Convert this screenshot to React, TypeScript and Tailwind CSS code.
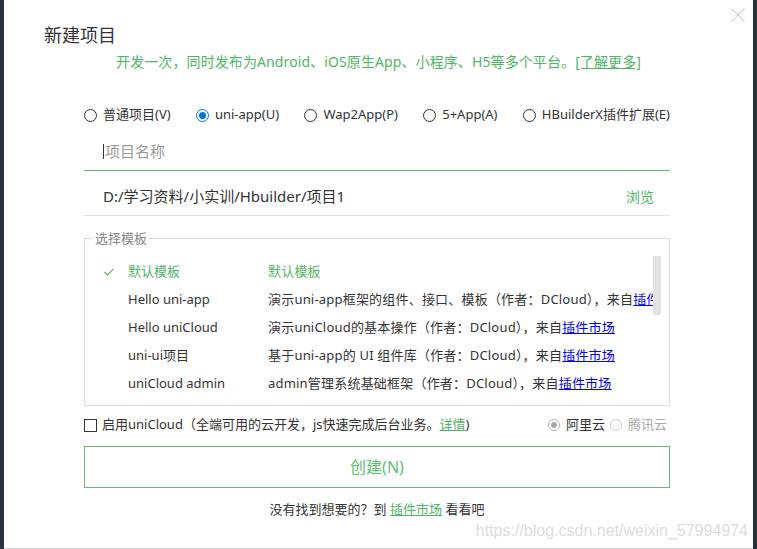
import React from "react";

const FONT = { fontFamily: '"Noto Sans", "Noto Sans CJK SC", sans-serif' };

const TEMPLATES = [
  { name: "默认模板", desc: "默认模板", active: true },
  { name: "Hello uni-app", desc: "演示uni-app框架的组件、接口、模板（作者：DCloud），来自", link: "插件市场" },
  { name: "Hello uniCloud", desc: "演示uniCloud的基本操作（作者：DCloud），来自", link: "插件市场" },
  { name: "uni-ui项目", desc: "基于uni-app的 UI 组件库（作者：DCloud），来自", link: "插件市场" },
  { name: "uniCloud admin", desc: "admin管理系统基础框架（作者：DCloud），来自", link: "插件市场" },
];

const TYPES = [
  { label: "普通项目(V)" },
  { label: "uni-app(U)", checked: true },
  { label: "Wap2App(P)" },
  { label: "5+App(A)" },
  { label: "HBuilderX插件扩展(E)" },
];

function Radio({ checked }: { checked?: boolean }) {
  return (
    <span
      className={`flex h-[13px] w-[13px] items-center justify-center rounded-full border ${
        checked ? "border-[#0078d7]" : "border-[#333]"
      }`}
    >
      {checked && <span className="h-[7px] w-[7px] rounded-full bg-[#0078d7]" />}
    </span>
  );
}

export default function App() {
  return (
    <div className="flex h-[549px] w-[757px] overflow-hidden bg-white" style={FONT}>
      <div className="w-[4px] bg-[#2c3140]" />
      <div className="relative flex-1 border-b border-[#d4d4d4] bg-white">
        <button className="absolute right-[8px] top-[8px]">
          <svg width="14" height="14" viewBox="0 0 14 14">
            <path d="M0.5 0.5L13.5 13.5M13.5 0.5L0.5 13.5" stroke="#c4c4c4" strokeWidth="1" />
          </svg>
        </button>

        <div className="mt-[23px] h-[24px] pl-[40px] text-[18px] leading-[24px] text-[#333]">新建项目</div>
        <div className="mt-[5px] h-[20px] text-center text-[14px] leading-[20px] tracking-[0.1px] text-[#4fb665]">
          开发一次，同时发布为Android、iOS原生App、小程序、H5等多个平台。
          <span className="underline">[了解更多]</span>
        </div>

        <div className="ml-[80px] w-[586px]">
          <div className="mt-[33px] flex h-[20px] items-center justify-between text-[13px] text-[#333]">
            {TYPES.map((t) => (
              <label key={t.label} className="flex items-center gap-[6px]">
                <Radio checked={t.checked} />
                <span>{t.label}</span>
              </label>
            ))}
          </div>

          <div className="mt-[8px] flex h-[38px] items-center border-b border-[#62b46c] pl-[19px]">
            <span className="mr-[1px] h-[15px] w-px bg-[#333]" />
            <span className="text-[15px] text-[#9a9a9a]">项目名称</span>
          </div>

          <div className="flex h-[45px] items-center justify-between border-b border-[#e2e2e2] pl-[19px] pr-[16px] pt-[6px]">
            <span className="text-[15px] text-[#333]">D:/学习资料/小实训/Hbuilder/项目1</span>
            <span className="text-[14px] text-[#4fb665]">浏览</span>
          </div>

          <fieldset className="mt-[14px] min-w-0 border border-[#dcdcdc]">
            <legend className="ml-[8px] px-[2px] text-[13px] leading-[16px] text-[#888]">选择模板</legend>
            <div className="relative mt-[10px] pb-[7px] pl-[19px] pr-[16px] pt-[2px]">
              <div className="absolute right-[8px] top-0 h-[59px] w-[8px] bg-[#e2e2e2]" />
              {TEMPLATES.map((t) => (
                <div key={t.name} className="flex h-[28px] items-center text-[13px] text-[#333]">
                  <span className="w-[24px] shrink-0">
                    {t.active && (
                      <svg width="10" height="8" viewBox="0 0 10 8">
                        <path d="M0.5 4L3.5 7L9.5 0.8" fill="none" stroke="#4fb665" strokeWidth="1.1" />
                      </svg>
                    )}
                  </span>
                  <span className={`w-[140px] shrink-0 ${t.active ? "text-[#4fb665]" : ""}`}>{t.name}</span>
                  <span
                    className={`min-w-0 flex-1 overflow-hidden whitespace-nowrap tracking-[0.2px] ${
                      t.active ? "text-[#4fb665]" : ""
                    }`}
                  >
                    {t.desc}
                    {t.link && <span className="text-[#0000ee] underline">{t.link}</span>}
                  </span>
                </div>
              ))}
            </div>
          </fieldset>

          <div className="mt-[9px] flex h-[20px] items-center text-[13px] text-[#333]">
            <span className="h-[13px] w-[13px] border border-[#333]" />
            <span className="ml-[5px]">
              启用uniCloud（全端可用的云开发，js快速完成后台业务。
              <span className="text-[#4fb665] underline">详情</span>)
            </span>
            <span className="ml-auto flex items-center gap-[6px] pr-[3px]">
              <span className="flex h-[12px] w-[12px] items-center justify-center rounded-full border border-[#b5b5b5]">
                <span className="h-[6px] w-[6px] rounded-full bg-[#a8a8a8]" />
              </span>
              <span className="text-[#333]">阿里云</span>
              <span className="ml-[-1px] h-[12px] w-[12px] rounded-full border border-[#c8c8c8]" />
              <span className="text-[#aaa]">腾讯云</span>
            </span>
          </div>

          <button className="mt-[11px] flex h-[42px] w-full items-center justify-center border border-[#66b972] text-[16px] text-[#5cbf6e]">
            创建(N)
          </button>

          <div className="mt-[12px] flex h-[20px] items-center justify-center text-[13px] text-[#333]">
            没有找到想要的？到&nbsp;<span className="text-[#4fb665] underline">插件市场</span>&nbsp;看看吧
          </div>
        </div>

        <div
          className="absolute bottom-[5px] right-[5px] text-[16px] text-[#dcdcdc]"
          style={{ fontFamily: '"Liberation Sans", Arial, sans-serif' }}
        >
          https://blog.csdn.net/weixin_57994974
        </div>
      </div>
      <div className="w-[4px] bg-[#2a2f3c]" />
    </div>
  );
}
